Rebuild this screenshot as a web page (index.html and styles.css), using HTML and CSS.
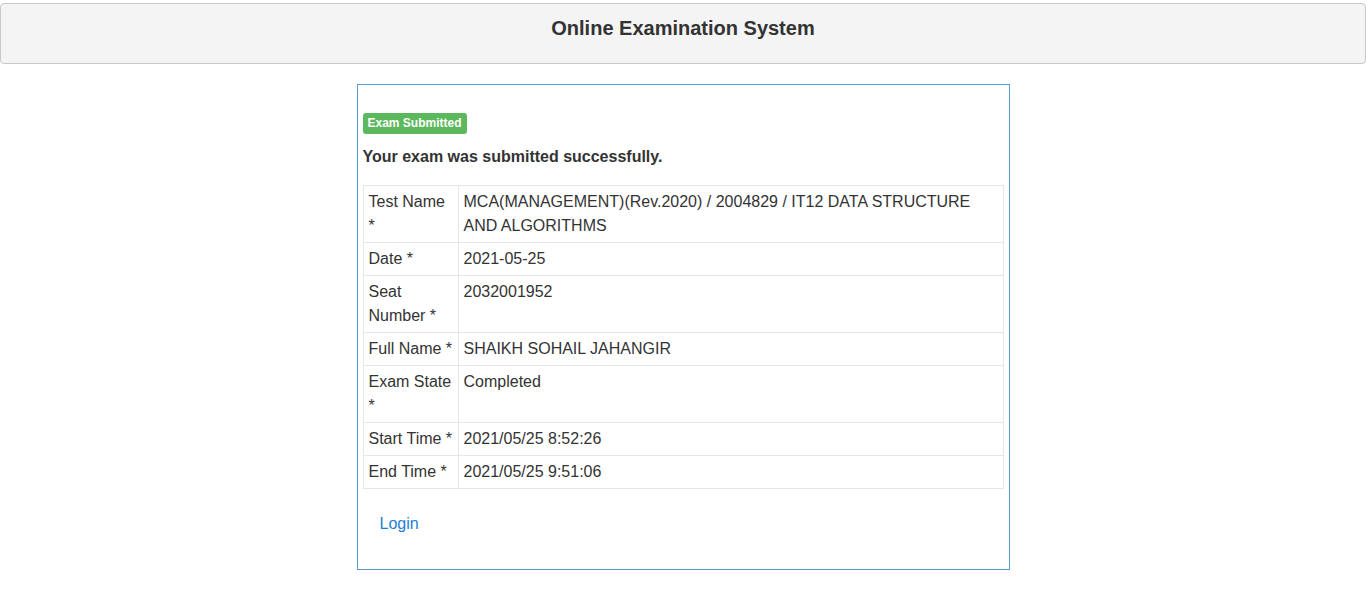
FILE: index.html
```html
<!DOCTYPE html>
<html>
<head>
<meta charset="utf-8">
<title>Online Examination System</title>
<link rel="stylesheet" href="styles.css">
</head>
<body>
<header class="topbar">
  <h1 class="title">Online Examination System</h1>
</header>
<main class="panel">
  <div class="badge-row"><span class="badge">Exam Submitted</span></div>
  <p class="message">Your exam was submitted successfully.</p>
  <table class="details">
    <tr><td class="key">Test Name *</td><td>MCA(MANAGEMENT)(Rev.2020) / 2004829 / IT12 DATA STRUCTURE AND ALGORITHMS</td></tr>
    <tr><td class="key">Date *</td><td>2021-05-25</td></tr>
    <tr><td class="key">Seat Number *</td><td>2032001952</td></tr>
    <tr><td class="key">Full Name *</td><td>SHAIKH SOHAIL JAHANGIR</td></tr>
    <tr><td class="key">Exam State *</td><td>Completed</td></tr>
    <tr><td class="key">Start Time *</td><td>2021/05/25 8:52:26</td></tr>
    <tr><td class="key">End Time *</td><td>2021/05/25 9:51:06</td></tr>
  </table>
  <div class="actions"><a class="login" href="#">Login</a></div>
</main>
</body>
</html>
```
FILE: styles.css
```css
html, body {
  margin: 0;
  padding: 0;
  background: #ffffff;
}
body {
  font-family: "Liberation Sans", Arial, sans-serif;
  font-size: 16px;
  color: #333333;
  padding-top: 3px;
}
.topbar {
  height: 59px;
  border: 1px solid #c9c9c9;
  border-radius: 4px;
  background: #f4f4f4;
  box-sizing: content-box;
}
.title {
  margin: 0;
  padding-top: 12px;
  text-align: center;
  font-size: 20px;
  line-height: 24px;
  font-weight: bold;
  color: #333333;
}
.panel {
  display: block;
  width: 641px;
  margin: 20px auto 0;
  padding: 28px 5px 0;
  border: 1px solid #5a9bcb;
  border-top-color: #4ba3d9;
  height: 456px;
  box-sizing: content-box;
}
.badge-row {
  display: flex;
}
.badge {
  display: block;
  background: #5cb85c;
  color: #ffffff;
  font-size: 12px;
  font-weight: bold;
  line-height: 14px;
  padding: 3px 5px 4px;
  border-radius: 3px;
}
.message {
  margin: 11px 0 16px;
  font-weight: bold;
  line-height: 24px;
}
.details {
  width: 100%;
  border-collapse: collapse;
  border: 1px solid #e6e6e6;
}
.details td {
  border: 1px solid #e6e6e6;
  padding: 4px 5px;
  line-height: 24px;
  vertical-align: top;
}
.details td.key {
  width: 84px;
}
.actions {
  padding: 23px 17px 0;
  line-height: 24px;
}
.login {
  color: #1b7fd6;
  text-decoration: none;
}
```
